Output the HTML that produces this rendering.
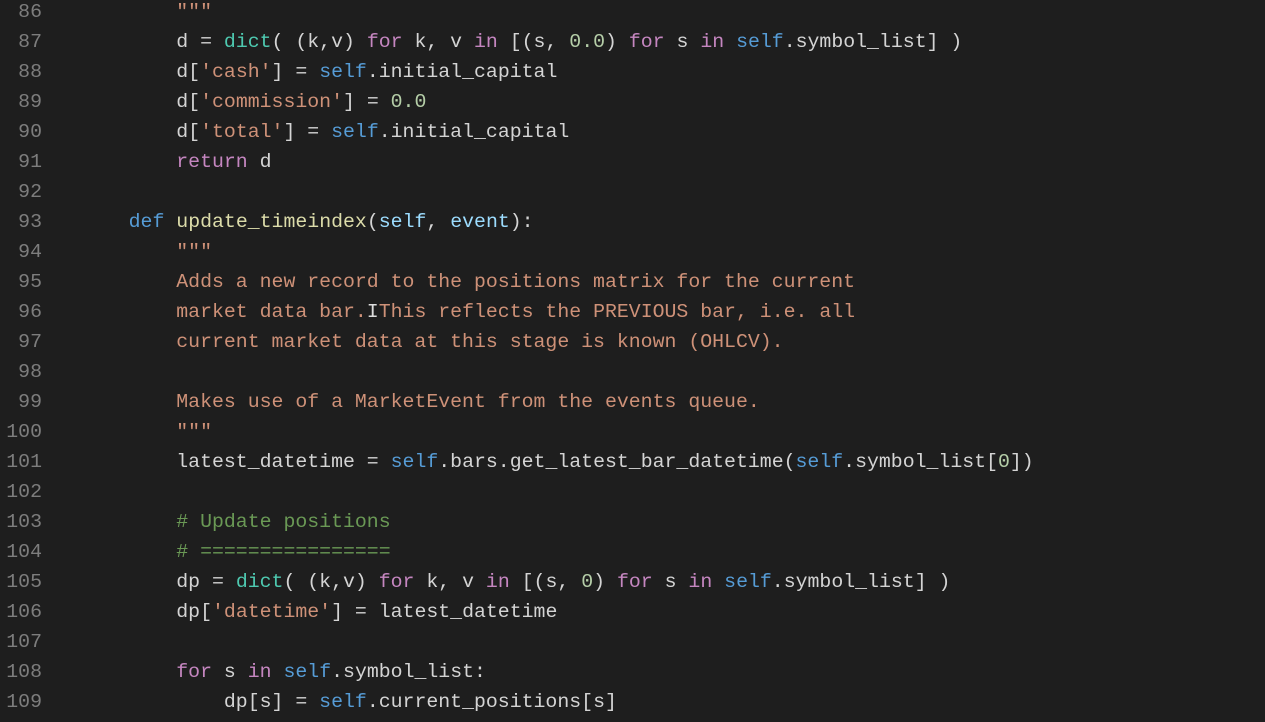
<!DOCTYPE html>
<html><head><meta charset="utf-8"><style>
html,body{margin:0;padding:0;background:#1e1e1e;width:1265px;height:722px;overflow:hidden}
.wrap{position:absolute;top:-3px;left:0;font-family:"Liberation Mono",monospace;font-size:19.85px;line-height:30px;color:#d4d4d4;white-space:pre}
.ln{position:absolute;top:0;left:0;width:42px;text-align:right;color:#7d7d7d}
.code{position:absolute;top:0;left:81px}
.k{color:#c586c0}.f{color:#dcdcaa}.c{color:#4ec9b0}.s{color:#569cd6}.st{color:#ce9178}.cm{color:#6a9955}.n{color:#b5cea8}.p{color:#9cdcfe}.d{color:#569cd6}
</style></head><body>
<div class="wrap"><div class="ln">86
87
88
89
90
91
92
93
94
95
96
97
98
99
100
101
102
103
104
105
106
107
108
109</div><div class="code">        <span class="st">"""</span>
        d = <span class="c">dict</span>( (k,v) <span class="k">for</span> k, v <span class="k">in</span> [(s, <span class="n">0.0</span>) <span class="k">for</span> s <span class="k">in</span> <span class="s">self</span>.symbol_list] )
        d[<span class="st">'cash'</span>] = <span class="s">self</span>.initial_capital
        d[<span class="st">'commission'</span>] = <span class="n">0.0</span>
        d[<span class="st">'total'</span>] = <span class="s">self</span>.initial_capital
        <span class="k">return</span> d

    <span class="d">def</span> <span class="f">update_timeindex</span>(<span class="p">self</span>, <span class="p">event</span>):
        <span class="st">"""</span>
<span class="st">        Adds a new record to the positions matrix for the current</span>
<span class="st">        market data bar.<span style="color:#ddd">I</span>This reflects the PREVIOUS bar, i.e. all</span>
<span class="st">        current market data at this stage is known (OHLCV).</span>

<span class="st">        Makes use of a MarketEvent from the events queue.</span>
<span class="st">        """</span>
        latest_datetime = <span class="s">self</span>.bars.get_latest_bar_datetime(<span class="s">self</span>.symbol_list[<span class="n">0</span>])

        <span class="cm"># Update positions</span>
        <span class="cm"># ================</span>
        dp = <span class="c">dict</span>( (k,v) <span class="k">for</span> k, v <span class="k">in</span> [(s, <span class="n">0</span>) <span class="k">for</span> s <span class="k">in</span> <span class="s">self</span>.symbol_list] )
        dp[<span class="st">'datetime'</span>] = latest_datetime

        <span class="k">for</span> s <span class="k">in</span> <span class="s">self</span>.symbol_list:
            dp[s] = <span class="s">self</span>.current_positions[s]</div></div>
</body></html>
